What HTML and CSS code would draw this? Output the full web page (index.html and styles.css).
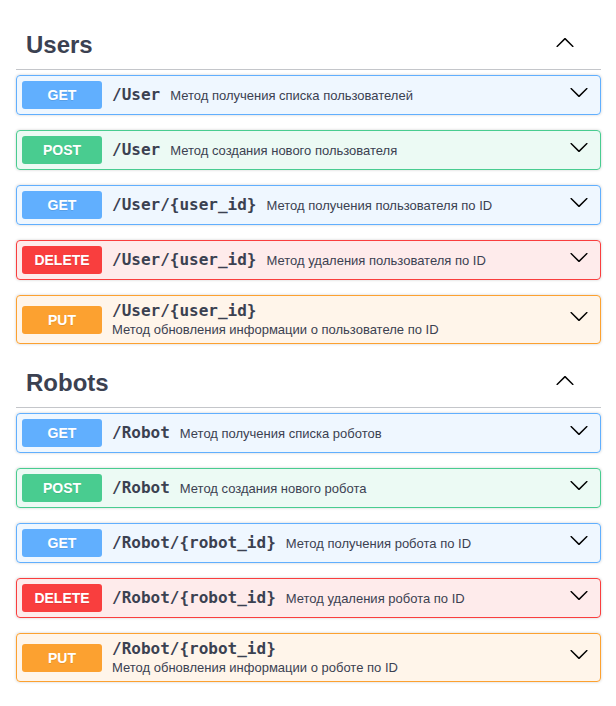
FILE: index.html
```html
<!DOCTYPE html>
<html lang="ru">
<head>
<meta charset="utf-8">
<title>API</title>
<link rel="stylesheet" href="styles.css">
</head>
<body>
<div class="page">
  <section class="tag-section">
    <h3 class="tag">
      <span class="tag-name">Users</span>
      <svg class="arrow-up" width="20" height="20" viewBox="0 0 20 20"><path d="M17.418 14.908c.272.268.709.268.979 0s.271-.701 0-.969l-7.908-7.83c-.27-.268-.707-.268-.979 0l-7.908 7.83c-.27.268-.27.701 0 .969.271.268.709.268.979 0L10 7.767l7.418 7.141z"/></svg>
    </h3>
    <div class="op op-get">
      <span class="method">GET</span>
      <div class="pd"><span class="path">/User</span><span class="desc">Метод получения списка пользователей</span></div>
      <svg class="arrow" width="20" height="20" viewBox="0 0 20 20"><path d="M17.418 6.109c.272-.268.709-.268.979 0s.271.701 0 .969l-7.908 7.83c-.27.268-.707.268-.979 0l-7.908-7.83c-.27-.268-.27-.701 0-.969.271-.268.709-.268.979 0L10 13.25l7.418-7.141z"/></svg>
    </div>
    <div class="op op-post">
      <span class="method">POST</span>
      <div class="pd"><span class="path">/User</span><span class="desc">Метод создания нового пользователя</span></div>
      <svg class="arrow" width="20" height="20" viewBox="0 0 20 20"><path d="M17.418 6.109c.272-.268.709-.268.979 0s.271.701 0 .969l-7.908 7.83c-.27.268-.707.268-.979 0l-7.908-7.83c-.27-.268-.27-.701 0-.969.271-.268.709-.268.979 0L10 13.25l7.418-7.141z"/></svg>
    </div>
    <div class="op op-get">
      <span class="method">GET</span>
      <div class="pd"><span class="path">/User/{user_id}</span><span class="desc">Метод получения пользователя по ID</span></div>
      <svg class="arrow" width="20" height="20" viewBox="0 0 20 20"><path d="M17.418 6.109c.272-.268.709-.268.979 0s.271.701 0 .969l-7.908 7.83c-.27.268-.707.268-.979 0l-7.908-7.83c-.27-.268-.27-.701 0-.969.271-.268.709-.268.979 0L10 13.25l7.418-7.141z"/></svg>
    </div>
    <div class="op op-delete">
      <span class="method">DELETE</span>
      <div class="pd"><span class="path">/User/{user_id}</span><span class="desc">Метод удаления пользователя по ID</span></div>
      <svg class="arrow" width="20" height="20" viewBox="0 0 20 20"><path d="M17.418 6.109c.272-.268.709-.268.979 0s.271.701 0 .969l-7.908 7.83c-.27.268-.707.268-.979 0l-7.908-7.83c-.27-.268-.27-.701 0-.969.271-.268.709-.268.979 0L10 13.25l7.418-7.141z"/></svg>
    </div>
    <div class="op op-put">
      <span class="method">PUT</span>
      <div class="pd pd-stacked"><span class="path">/User/{user_id}</span><span class="desc">Метод обновления информации о пользователе по ID</span></div>
      <svg class="arrow" width="20" height="20" viewBox="0 0 20 20"><path d="M17.418 6.109c.272-.268.709-.268.979 0s.271.701 0 .969l-7.908 7.83c-.27.268-.707.268-.979 0l-7.908-7.83c-.27-.268-.27-.701 0-.969.271-.268.709-.268.979 0L10 13.25l7.418-7.141z"/></svg>
    </div>
  </section>
  <section class="tag-section">
    <h3 class="tag">
      <span class="tag-name">Robots</span>
      <svg class="arrow-up" width="20" height="20" viewBox="0 0 20 20"><path d="M17.418 14.908c.272.268.709.268.979 0s.271-.701 0-.969l-7.908-7.83c-.27-.268-.707-.268-.979 0l-7.908 7.83c-.27.268-.27.701 0 .969.271.268.709.268.979 0L10 7.767l7.418 7.141z"/></svg>
    </h3>
    <div class="op op-get">
      <span class="method">GET</span>
      <div class="pd"><span class="path">/Robot</span><span class="desc">Метод получения списка роботов</span></div>
      <svg class="arrow" width="20" height="20" viewBox="0 0 20 20"><path d="M17.418 6.109c.272-.268.709-.268.979 0s.271.701 0 .969l-7.908 7.83c-.27.268-.707.268-.979 0l-7.908-7.83c-.27-.268-.27-.701 0-.969.271-.268.709-.268.979 0L10 13.25l7.418-7.141z"/></svg>
    </div>
    <div class="op op-post">
      <span class="method">POST</span>
      <div class="pd"><span class="path">/Robot</span><span class="desc">Метод создания нового робота</span></div>
      <svg class="arrow" width="20" height="20" viewBox="0 0 20 20"><path d="M17.418 6.109c.272-.268.709-.268.979 0s.271.701 0 .969l-7.908 7.83c-.27.268-.707.268-.979 0l-7.908-7.83c-.27-.268-.27-.701 0-.969.271-.268.709-.268.979 0L10 13.25l7.418-7.141z"/></svg>
    </div>
    <div class="op op-get">
      <span class="method">GET</span>
      <div class="pd"><span class="path">/Robot/{robot_id}</span><span class="desc">Метод получения робота по ID</span></div>
      <svg class="arrow" width="20" height="20" viewBox="0 0 20 20"><path d="M17.418 6.109c.272-.268.709-.268.979 0s.271.701 0 .969l-7.908 7.83c-.27.268-.707.268-.979 0l-7.908-7.83c-.27-.268-.27-.701 0-.969.271-.268.709-.268.979 0L10 13.25l7.418-7.141z"/></svg>
    </div>
    <div class="op op-delete">
      <span class="method">DELETE</span>
      <div class="pd"><span class="path">/Robot/{robot_id}</span><span class="desc">Метод удаления робота по ID</span></div>
      <svg class="arrow" width="20" height="20" viewBox="0 0 20 20"><path d="M17.418 6.109c.272-.268.709-.268.979 0s.271.701 0 .969l-7.908 7.83c-.27.268-.707.268-.979 0l-7.908-7.83c-.27-.268-.27-.701 0-.969.271-.268.709-.268.979 0L10 13.25l7.418-7.141z"/></svg>
    </div>
    <div class="op op-put">
      <span class="method">PUT</span>
      <div class="pd pd-stacked"><span class="path">/Robot/{robot_id}</span><span class="desc">Метод обновления информации о роботе по ID</span></div>
      <svg class="arrow" width="20" height="20" viewBox="0 0 20 20"><path d="M17.418 6.109c.272-.268.709-.268.979 0s.271.701 0 .969l-7.908 7.83c-.27.268-.707.268-.979 0l-7.908-7.83c-.27-.268-.27-.701 0-.969.271-.268.709-.268.979 0L10 13.25l7.418-7.141z"/></svg>
    </div>
  </section>
</div>
</body>
</html>
```

FILE: styles.css
```css
html, body {
  margin: 0;
  padding: 0;
  background: #fff;
}

body {
  font-family: "Liberation Sans", Arial, sans-serif;
  color: #3b4151;
}

.page {
  padding: 21px 15px 0 16px;
}

.tag {
  display: flex;
  align-items: center;
  margin: 0 0 5px;
  padding: 10px 26px 10px 10px;
  font-size: 24px;
  line-height: 28px;
  font-weight: 700;
  color: #3b4151;
  border-bottom: 1px solid rgba(59, 65, 81, 0.3);
}

.tag-name {
  flex: 1;
}

.arrow-up,
.arrow {
  flex-shrink: 0;
  fill: #000;
  margin-bottom: 7px;
}

.op {
  display: flex;
  align-items: center;
  margin: 0 0 15px;
  padding: 5px 11px 5px 5px;
  border: 1px solid #000;
  border-radius: 4px;
  box-shadow: 0 0 3px rgba(0, 0, 0, 0.19);
}

.method {
  flex-shrink: 0;
  width: 80px;
  padding: 6px 0;
  border-radius: 3px;
  font-size: 14px;
  line-height: 16px;
  font-weight: 700;
  text-align: center;
  color: #fff;
  text-shadow: 0 1px 0 rgba(0, 0, 0, 0.1);
}

.pd {
  flex: 1;
  display: flex;
  align-items: center;
  margin-left: 10px;
}

.pd-stacked {
  flex-direction: column;
  align-items: flex-start;
}

.path {
  padding-right: 10px;
  font-family: "DejaVu Sans Mono", monospace;
  font-size: 16px;
  line-height: 20px;
  font-weight: 700;
  color: #3b4151;
}

.desc {
  font-size: 13px;
  line-height: 17px;
  color: #3b4151;
}

.op-get { background: rgba(97, 175, 254, 0.1); border-color: #61affe; }
.op-get .method { background: #61affe; }

.op-post { background: rgba(73, 204, 144, 0.1); border-color: #49cc90; }
.op-post .method { background: #49cc90; }

.op-delete { background: rgba(249, 62, 62, 0.1); border-color: #f93e3e; }
.op-delete .method { background: #f93e3e; }

.op-put { background: rgba(252, 161, 48, 0.1); border-color: #fca130; }
.op-put .method { background: #fca130; }
```
